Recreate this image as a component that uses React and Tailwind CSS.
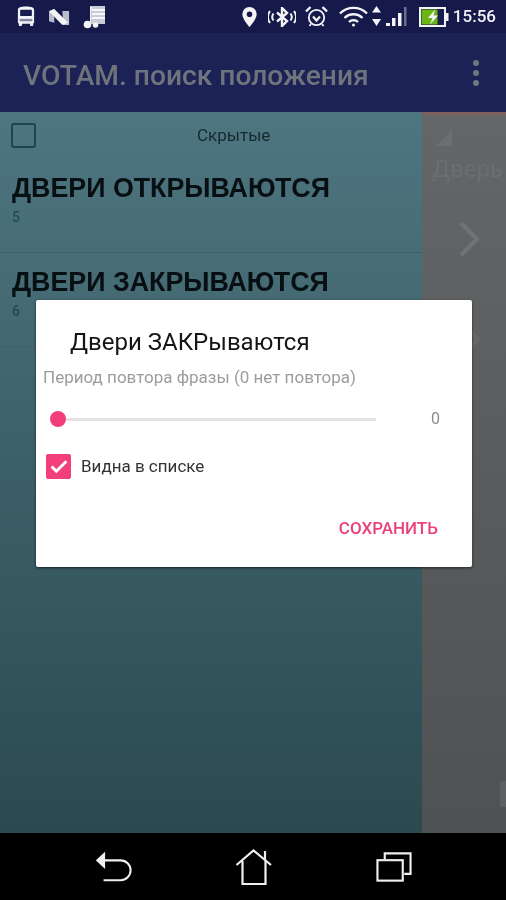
import React from 'react';

const font = { fontFamily: '"Roboto", "Liberation Sans", sans-serif' };

const BusIcon = () => (
  <svg width="18" height="21" viewBox="0 0 20 22" preserveAspectRatio="none" fill="none">
    <path d="M1 4c0-2.500 3-3.500 9-3.500S19 1.500 19 4v13a1.500 1.500 0 0 1-1 1.400V20a1 1 0 0 1-1 1h-1.500a1 1 0 0 1-1-1v-1.500h-9V20a1 1 0 0 1-1 1H3a1 1 0 0 1-1-1v-1.600A1.500 1.500 0 0 1 1 17V4z" fill="#f2f3f6" />
    <rect x="3.500" y="4" width="13" height="6.500" rx="0.500" fill="#1a1d4f" />
    <rect x="3" y="13.500" width="14" height="2.500" fill="#1a1d4f" opacity="0.500" />
  </svg>
);

const NIcon = () => (
  <svg width="21" height="16" viewBox="0 0 22 17" preserveAspectRatio="none">
    <path d="M0 2.500 5.500 0v14.500L0 13z" fill="#b9bccb" />
    <path d="M14 2h7v15h-6z" fill="#b9bccb" />
    <path d="M5.500 0 20 14.500 14 17 0 2.500z" fill="#f4f4f7" />
  </svg>
);

const MusicListIcon = () => (
  <svg width="23" height="24" viewBox="0 0 23 24">
    <path d="M7 0h15v18H9V4H7z" fill="#c9cbd6" />
    <path d="M9 4h13M9 8h13M9 12h13" stroke="#f7f7fa" strokeWidth="2" />
    <circle cx="4.500" cy="18.500" r="3.800" fill="#f4f4f7" />
    <circle cx="12.500" cy="19" r="2.800" fill="#f4f4f7" />
    <rect x="7" y="1" width="1.800" height="17" fill="#f4f4f7" />
  </svg>
);

const PinIcon = () => (
  <svg width="15" height="20" viewBox="0 0 15 20">
    <path fillRule="evenodd" d="M7.500 0A7.200 7.200 0 0 0 .3 7.200C.3 12 7.500 20 7.500 20s7.200-8 7.200-12.800A7.200 7.200 0 0 0 7.500 0zm0 4.500a2.800 2.800 0 1 1 0 5.600 2.800 2.800 0 0 1 0-5.600z" fill="#f4f4f7" />
  </svg>
);

const BluetoothIcon = () => (
  <svg width="28" height="20" viewBox="0 0 28 20" fill="none" stroke="#f4f4f7">
    <path d="M9 5.500 19 14l-5 5V1l5 5-10 8.500" strokeWidth="2.400" />
    <path d="M5.500 6.500c-1.500 2-1.500 5 0 7M2 4c-2.500 3.500-2.500 8.500 0 12M22.500 6.500c1.500 2 1.500 5 0 7M26 4c2.500 3.500 2.500 8.500 0 12" strokeWidth="2" />
  </svg>
);

const AlarmIcon = () => (
  <svg width="23" height="23" viewBox="0 0 23 23" fill="none" stroke="#f4f4f7">
    <circle cx="11.500" cy="12.500" r="7.700" strokeWidth="1.800" />
    <path d="M1 6.500 5.500 2M22 6.500 17.500 2" strokeWidth="2.400" />
    <path d="M4.500 21 6 19M18.500 21 17 19" strokeWidth="1.800" />
    <path d="M8 11.500l3.500 4 3.500-4" strokeWidth="2.200" />
  </svg>
);

const WifiIcon = () => (
  <svg width="29" height="21" viewBox="0 0 29 21" fill="none" stroke="#f4f4f7" strokeWidth="2.400">
    <path d="M1 7.500c7.500-7.500 19.500-7.500 27 0" />
    <path d="M5.500 12c5-5 13-5 18 0" />
    <path d="M10 16c2.500-2.500 6.500-2.500 9 0" />
    <circle cx="14.500" cy="19" r="1.500" fill="#f4f4f7" stroke="none" />
  </svg>
);

const SignalIcon = () => (
  <svg width="36" height="22" viewBox="0 0 36 22">
    <path d="M5.500 0 10 6.500H1zM1 13h9l-4.500 7z" fill="#f4f4f7" />
    <rect x="15" y="17" width="4" height="3" fill="#f4f4f7" />
    <rect x="21" y="12" width="3.500" height="8" fill="#f4f4f7" />
    <rect x="27" y="7" width="3.500" height="13" fill="#f4f4f7" />
    <rect x="33" y="1" width="2.500" height="19" fill="#6a6f90" />
  </svg>
);

const BatteryIcon = () => (
  <svg width="30" height="20" viewBox="0 0 30 20">
    <rect x="1" y="1" width="25" height="18" fill="#1a1d4f" stroke="#f4f4f7" strokeWidth="2" />
    <rect x="2.500" y="2.500" width="16" height="15" fill="#6ab514" />
    <rect x="26.500" y="6" width="3" height="8" fill="#f4f4f7" />
    <path d="M16 2.500 9 11h4.500L11 17.500l8-9h-4.500z" fill="#f4f4f7" />
  </svg>
);

const StatusBar = () => (
  <div className="h-[33px] bg-[#161a4b] flex items-center pl-[17px] pr-[10px] shrink-0">
    <div className="flex items-center">
      <BusIcon />
      <div className="ml-[14px]"><NIcon /></div>
      <div className="ml-[13px] mt-[2px]"><MusicListIcon /></div>
    </div>
    <div className="ml-auto flex items-center">
      <PinIcon />
      <div className="ml-[11px]"><BluetoothIcon /></div>
      <div className="ml-[9px]"><AlarmIcon /></div>
      <div className="ml-[11px]"><WifiIcon /></div>
      <div className="ml-[3px]"><SignalIcon /></div>
      <div className="ml-[12px]"><BatteryIcon /></div>
      <span className="ml-[4px] text-[17px] font-medium text-[#f2f3f6]" style={font}>15:56</span>
    </div>
  </div>
);

const AppBar = () => (
  <div className="h-[79px] bg-[#1c2256] flex items-center pl-[23px] pr-[27px] shrink-0">
    <span className="text-[28.200px] pt-[8px] font-medium text-[#6f747c]" style={font}>VOTAM. поиск положения</span>
    <div className="ml-auto flex flex-col gap-[4px]">
      <div className="w-[6px] h-[6px] rounded-full bg-[#72777f]" />
      <div className="w-[6px] h-[6px] rounded-full bg-[#72777f]" />
      <div className="w-[6px] h-[6px] rounded-full bg-[#72777f]" />
    </div>
  </div>
);

const PhraseRow = ({ title, count }) => (
  <div className="h-[94px] border-b border-[#3f6068] pl-[12px] pt-[12px]">
    <div className="text-[26.800px] leading-[34px] font-bold text-[#070f12]" style={{ fontFamily: '"Liberation Sans", sans-serif' }}>{title}</div>
    <div className="mt-[2px] text-[14px] leading-[20px] font-medium text-[#1f4a55]" style={font}>{count}</div>
  </div>
);

const ListPanel = () => (
  <div className="flex-1 bg-gradient-to-b from-[#4e7680] to-[#2b4a50]">
    <div className="h-[47px] flex items-center pl-[11px]">
      <div className="w-[25px] h-[25px] rounded-[3px] border-[2.500px] border-[#1f4450]" />
      <span className="ml-[161px] mt-[1px] text-[17px] text-[#14292f]" style={font}>Скрытые</span>
    </div>
    <PhraseRow title="ДВЕРИ ОТКРЫВАЮТСЯ" count="5" />
    <PhraseRow title="ДВЕРИ ЗАКРЫВАЮТСЯ" count="6" />
  </div>
);

// страница за списком, почти не видна
const SidePanel = () => (
  <div className="w-[84px] shrink-0 bg-gradient-to-b from-[#646667] to-[#4f5254] overflow-hidden">
    <div className="h-[10px] border-t-[3px] border-[#80605f]" />
    <div className="pl-[12px] mt-[6px]">
      <svg width="22" height="20" viewBox="0 0 22 20">
        <path d="M2 18 18 2v16z" fill="#6c6f71" />
      </svg>
    </div>
    <div className="pl-[10px] mt-[6px] text-[24px] leading-[30px] whitespace-nowrap text-[#6b6e70]" style={font}>Дверь</div>
    <div className="pl-[36px] mt-[37px]">
      <svg width="22" height="36" viewBox="0 0 22 36" fill="none" stroke="#717476" strokeWidth="4">
        <path d="M3 2 19 18 3 34" />
      </svg>
    </div>
    <div className="pl-[44px] mt-[70px]">
      <svg width="14" height="24" viewBox="0 0 14 24" fill="none" stroke="#66696c" strokeWidth="4">
        <path d="M2 2 12 12 2 22" />
      </svg>
    </div>
    <div className="ml-[78px] mt-[430px] w-[6px] h-[26px] bg-[#5c6063]" />
  </div>
);

const SaveDialog = () => (
  <div className="absolute left-[36px] top-[300px] w-[436px] h-[267px] bg-white rounded-[2px] shadow-[0_1px_3px_rgba(0,0,0,0.6)]" style={font}>
    <div className="pl-[34px] pt-[26px] text-[24px] leading-[32px] text-[#151515]">Двери ЗАКРываются</div>
    <div className="pl-[7px] mt-[9px] text-[17px] leading-[20px] text-[#9c9c9c]">Период повтора фразы (0 нет повтора)</div>
    <div className="flex items-center pl-[14px] mt-[22px] h-[20px]">
      <div className="w-[16px] h-[16px] rounded-full bg-[#f23e7b] shrink-0" />
      <div className="w-[310px] h-[3px] bg-[#e3e3e3]" />
      <span className="ml-[55px] text-[16px] text-[#8e8e8e]">0</span>
    </div>
    <div className="flex items-center pl-[10px] mt-[24px]">
      <div className="w-[25px] h-[25px] rounded-[2px] bg-[#f23e7b] flex items-center justify-center">
        <svg width="18" height="15" viewBox="0 0 17 14" fill="none" stroke="#ffffff" strokeWidth="2.800">
          <path d="M1.500 7 6 11.500 15.500 2" />
        </svg>
      </div>
      <span className="ml-[10px] mt-[1px] text-[17px] text-[#333333]">Видна в списке</span>
    </div>
    <div className="flex justify-end pr-[34px] mt-[36px]">
      <span className="text-[17px] font-medium text-[#ea4179]">СОХРАНИТЬ</span>
    </div>
  </div>
);

const NavBar = () => (
  <div className="h-[67px] bg-black flex items-center shrink-0 pl-[96px] pr-[94px] justify-between">
    <svg width="36" height="34" viewBox="0 0 38 34" fill="none" stroke="#efefef" strokeWidth="2.200">
      <path d="M8 10h18a10 10 0 0 1 0 21H8" />
      <path d="M1.500 10 8.500 3.500v13z" fill="#efefef" />
    </svg>
    <svg width="38" height="36" viewBox="0 0 38 36" fill="none" stroke="#efefef" strokeWidth="2.200">
      <path d="M1.500 16 18.500 1.500 36 16" />
      <path d="M7.500 12v23h23V12" />
      <path d="M30 2v9" />
    </svg>
    <svg width="36" height="32" viewBox="0 0 37 32" fill="none" stroke="#efefef" strokeWidth="2.200">
      <rect x="1.500" y="9" width="26" height="21" />
      <path d="M9 8V2h26.500v21H29" />
    </svg>
  </div>
);

export default function App() {
  return (
    <div className="relative w-[506px] h-[900px] flex flex-col overflow-hidden bg-black blur-[0.4px]">
      <StatusBar />
      <AppBar />
      <div className="flex flex-1 min-h-0">
        <ListPanel />
        <SidePanel />
      </div>
      <NavBar />
      <SaveDialog />
    </div>
  );
}
